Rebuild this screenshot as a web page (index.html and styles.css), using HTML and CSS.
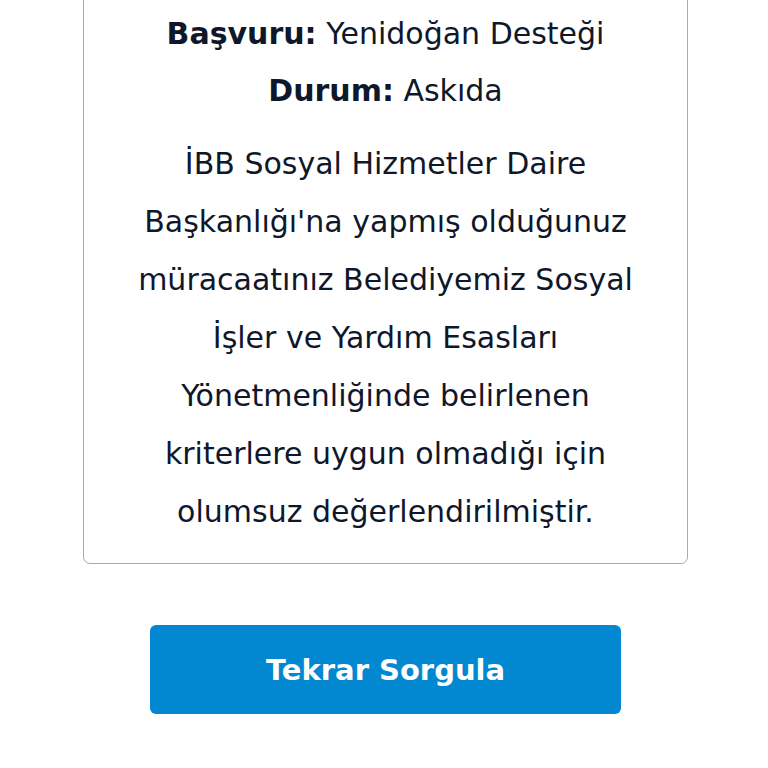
FILE: index.html
```html
<!DOCTYPE html>
<html lang="tr">
<head>
    <title>Başvuru Sonucu</title>
    <meta name="viewport" content="width=device-width, initial-scale=1">
    <link rel="stylesheet" href="styles.css">
</head>
<body>
    <div class="page">
        <div class="result-card">
            <p class="row"><b>Başvuru:</b> Yenidoğan Desteği</p>
            <p class="row"><b>Durum:</b> Askıda</p>
            <p class="message">İBB Sosyal Hizmetler Daire Başkanlığı'na yapmış olduğunuz müracaatınız Belediyemiz Sosyal İşler ve Yardım Esasları Yönetmenliğinde belirlenen kriterlere uygun olmadığı için olumsuz değerlendirilmiştir.</p>
        </div>
        <button class="btn-retry" type="button">Tekrar Sorgula</button>
    </div>
</body>
</html>
```

FILE: styles.css
```css
html, body {
    margin: 0;
    padding: 0;
    background: #fff;
}
body {
    font-family: "DejaVu Sans", "Noto Sans", sans-serif;
    color: #0f172a;
    overflow: hidden;
}
.page {
    display: flex;
    flex-direction: column;
    align-items: center;
    padding-left: 3px;
}
.result-card {
    box-sizing: border-box;
    width: 605px;
    margin-top: -60px;
    padding: 64px 40px 22px;
    border: 1px solid #aaa;
    border-radius: 7px;
    text-align: center;
    font-size: 30px;
}
.row {
    margin: 0;
    line-height: 57px;
}
.row b {
    font-weight: 700;
}
.message {
    margin: 16px 0 0;
    line-height: 58px;
}
.btn-retry {
    width: 471px;
    height: 89px;
    margin-top: 61px;
    border: none;
    border-radius: 6px;
    background: #0288d1;
    color: #fff;
    font-family: "DejaVu Sans", "Noto Sans", sans-serif;
    font-size: 29px;
    font-weight: 700;
}
```
